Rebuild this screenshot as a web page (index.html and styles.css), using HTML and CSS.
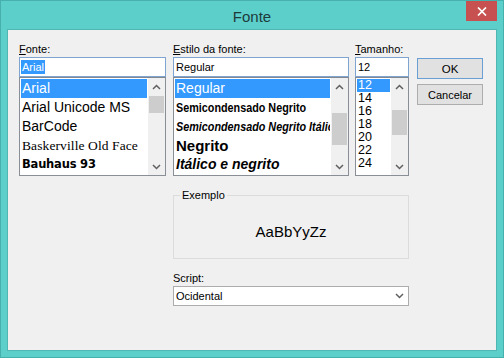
FILE: index.html
```html
<!DOCTYPE html>
<html lang="pt">
<head>
<meta charset="utf-8">
<title>Fonte</title>
<link rel="stylesheet" href="styles.css">
</head>
<body>
<div class="window">
  <div class="titlebar">
    <span class="title">Fonte</span>
    <button class="close" aria-label="Fechar">
      <svg width="10" height="9" viewBox="0 0 10 9"><path d="M1 0.5 L9 8.5 M9 0.5 L1 8.5" stroke="#fff" stroke-width="1.7" fill="none"/></svg>
    </button>
  </div>
  <div class="client">
    <div class="pick pick-font">
      <div class="lbl"><u>F</u>onte:</div>
      <div class="edit"><span class="sel">Arial</span></div>
      <div class="list">
        <ul class="items">
          <li class="on f-sans">Arial</li>
          <li class="f-sans">Arial Unicode MS</li>
          <li class="f-sans">BarCode</li>
          <li class="f-bask">Baskerville Old Face</li>
          <li class="f-bau">Bauhaus 93</li>
        </ul>
        <div class="sb">
          <div class="sb-btn"><svg width="9" height="6" viewBox="0 0 9 6"><path d="M1 5 L4.5 1.5 L8 5" stroke="#606060" stroke-width="1.5" fill="none"/></svg></div>
          <div class="sb-track"><div class="thumb thumb-font"></div></div>
          <div class="sb-btn"><svg width="9" height="6" viewBox="0 0 9 6"><path d="M1 1 L4.5 4.5 L8 1" stroke="#606060" stroke-width="1.5" fill="none"/></svg></div>
        </div>
      </div>
    </div>

    <div class="pick pick-style">
      <div class="lbl"><u>E</u>stilo da fonte:</div>
      <div class="edit edit-pad">Regular</div>
      <div class="list">
        <ul class="items">
          <li class="on s-reg">Regular</li>
          <li class="s-semi"><span class="narrow">Semicondensado Negrito</span></li>
          <li class="s-semi s-it"><span class="narrow">Semicondensado Negrito Itálico</span></li>
          <li class="s-bold">Negrito</li>
          <li class="s-boldit">Itálico e negrito</li>
        </ul>
        <div class="sb">
          <div class="sb-btn"><svg width="9" height="6" viewBox="0 0 9 6"><path d="M1 5 L4.5 1.5 L8 5" stroke="#606060" stroke-width="1.5" fill="none"/></svg></div>
          <div class="sb-track"><div class="thumb thumb-style"></div></div>
          <div class="sb-btn"><svg width="9" height="6" viewBox="0 0 9 6"><path d="M1 1 L4.5 4.5 L8 1" stroke="#606060" stroke-width="1.5" fill="none"/></svg></div>
        </div>
      </div>
    </div>

    <div class="pick pick-size">
      <div class="lbl"><u>T</u>amanho:</div>
      <div class="edit edit-pad">12</div>
      <div class="list">
        <ul class="items sizes">
          <li class="on">12</li>
          <li>14</li>
          <li>16</li>
          <li>18</li>
          <li>20</li>
          <li>22</li>
          <li>24</li>
        </ul>
        <div class="sb">
          <div class="sb-btn"><svg width="9" height="6" viewBox="0 0 9 6"><path d="M1 5 L4.5 1.5 L8 5" stroke="#606060" stroke-width="1.5" fill="none"/></svg></div>
          <div class="sb-track"><div class="thumb thumb-size"></div></div>
          <div class="sb-btn"><svg width="9" height="6" viewBox="0 0 9 6"><path d="M1 1 L4.5 4.5 L8 1" stroke="#606060" stroke-width="1.5" fill="none"/></svg></div>
        </div>
      </div>
    </div>

    <div class="buttons">
      <button class="btn btn-default">OK</button>
      <button class="btn">Cancelar</button>
    </div>

    <fieldset class="sample">
      <legend>Exemplo</legend>
      <span class="sample-text">AaBbYyZz</span>
    </fieldset>

    <div class="script">
      <div class="lbl lbl-script">Script:</div>
      <div class="combo">
        <span>Ocidental</span>
        <svg width="9" height="6" viewBox="0 0 9 6"><path d="M1 1 L4.5 4.5 L8 1" stroke="#606060" stroke-width="1.5" fill="none"/></svg>
      </div>
    </div>
  </div>
</div>
</body>
</html>
```

FILE: styles.css
```css
html, body {
  margin: 0;
  padding: 0;
}
body {
  font-family: "Liberation Sans", Arial, sans-serif;
  font-size: 11px;
  color: #000;
}
.window {
  width: 504px;
  height: 358px;
  box-sizing: border-box;
  border: 1px solid #46b0ac;
  background: #5ccfcb;
  padding: 0 6px 6px;
  display: flex;
  flex-direction: column;
  position: relative;
}
.titlebar {
  height: 28px;
  flex: none;
  display: flex;
  align-items: center;
  justify-content: center;
}
.title {
  font-size: 15px;
  color: #1e3b3b;
  margin-top: 2px;
}
.close {
  position: absolute;
  top: 0;
  right: 6px;
  width: 31px;
  height: 20px;
  border: 0;
  padding: 0;
  background: #c75050;
  display: flex;
  align-items: center;
  justify-content: center;
}
.client {
  flex: 1;
  border: 1px solid #4fb6b2;
  background: #f0f0f0;
  padding: 12px 0 0 11px;
  display: grid;
  grid-template-columns: 147px 7px 176px 6px 54px 8px 66px;
  grid-template-rows: auto auto auto;
  align-content: start;
  align-items: start;
}
.pick {
  display: flex;
  flex-direction: column;
}
.pick-font { grid-column: 1; grid-row: 1; }
.pick-style { grid-column: 3; grid-row: 1; }
.pick-size { grid-column: 5; grid-row: 1; }
.lbl {
  height: 15px;
  line-height: 15px;
  white-space: nowrap;
}
.lbl u {
  text-decoration-thickness: 1px;
  text-underline-offset: 1px;
}
.edit {
  height: 20px;
  box-sizing: border-box;
  border: 1px solid #7fa4cf;
  background: #fff;
  padding: 0 1px;
  display: flex;
  align-items: center;
  white-space: nowrap;
}
.edit-pad {
  padding-left: 2px;
}
.sel {
  background: #3399ff;
  color: #fff;
  line-height: 14px;
  padding: 0 1px;
}
.list {
  height: 99px;
  box-sizing: border-box;
  border: 1px solid #8a8f97;
  border-top-color: #828790;
  background: #fff;
  display: flex;
}
.items {
  flex: 1;
  min-width: 0;
  margin: 0;
  padding: 1px;
  list-style: none;
  overflow: hidden;
}
.items li {
  height: 19px;
  line-height: 19px;
  padding-left: 1px;
  white-space: nowrap;
  overflow: hidden;
  font-size: 14px;
}
.items li.on {
  background: #3399ff;
  color: #fff;
}
.f-sans {
  font-family: "Liberation Sans", Arial, sans-serif;
}
.f-bask {
  font-family: "Liberation Serif", "Times New Roman", serif;
  font-size: 13.5px !important;
  letter-spacing: 0.1px;
}
.f-bau {
  font-family: "DejaVu Sans", sans-serif;
  font-weight: 900;
  font-size: 11.5px !important;
  letter-spacing: -0.2px;
}
.s-reg {
  font-size: 14px;
}
.s-semi {
  font-weight: bold;
  font-size: 13px !important;
}
.narrow {
  display: inline-block;
  transform: scaleX(0.83);
  transform-origin: 0 50%;
}
.s-it {
  font-style: italic;
}
.s-bold {
  font-weight: bold;
  font-size: 15px !important;
}
.s-boldit {
  font-weight: bold;
  font-style: italic;
  font-size: 14px !important;
}
.sizes li {
  height: 13px;
  line-height: 13px;
  font-size: 12.5px;
}
.sb {
  width: 17px;
  flex: none;
  background: #f0f0f0;
  display: flex;
  flex-direction: column;
}
.sb-btn {
  height: 17px;
  flex: none;
  display: flex;
  align-items: center;
  justify-content: center;
}
.sb-btn svg {
  display: block;
}
.sb-track {
  flex: 1;
}
.thumb {
  background: #cdcdcd;
  margin: 0 1px;
}
.thumb-font { margin-top: 1px; height: 17px; }
.thumb-style { margin-top: 18px; height: 32px; }
.thumb-size { margin-top: 15px; height: 25px; }
.buttons {
  grid-column: 7;
  grid-row: 1;
  margin-top: 16px;
  display: flex;
  flex-direction: column;
  gap: 5px;
}
.btn {
  height: 21px;
  box-sizing: border-box;
  border: 1px solid #adadad;
  background: #e1e1e1;
  font-family: "Liberation Sans", Arial, sans-serif;
  font-size: 11px;
  color: #000;
  padding: 0;
}
.btn-default {
  border-color: #6a9fd4;
  font-size: 11.5px;
}
.sample {
  grid-column: 3 / 6;
  grid-row: 2;
  margin: 12px 0 0;
  padding: 0;
  min-width: 0;
  border: 1px solid #dcdcdc;
}
.sample legend {
  margin-left: 6px;
  padding: 0 2px;
  line-height: 14px;
  font-size: 11px;
}
.sample-text {
  display: block;
  text-align: center;
  font-size: 15px;
  line-height: 20px;
  padding: 20px 0 16px;
}
.script {
  grid-column: 3 / 6;
  grid-row: 3;
  margin-top: 11px;
  display: flex;
  flex-direction: column;
}
.lbl-script {
  height: 16px;
  line-height: 16px;
}
.combo {
  height: 20px;
  box-sizing: border-box;
  border: 1px solid #acacac;
  background: #fff;
  display: flex;
  align-items: center;
  justify-content: space-between;
  padding: 0 4px 0 2px;
}
```
